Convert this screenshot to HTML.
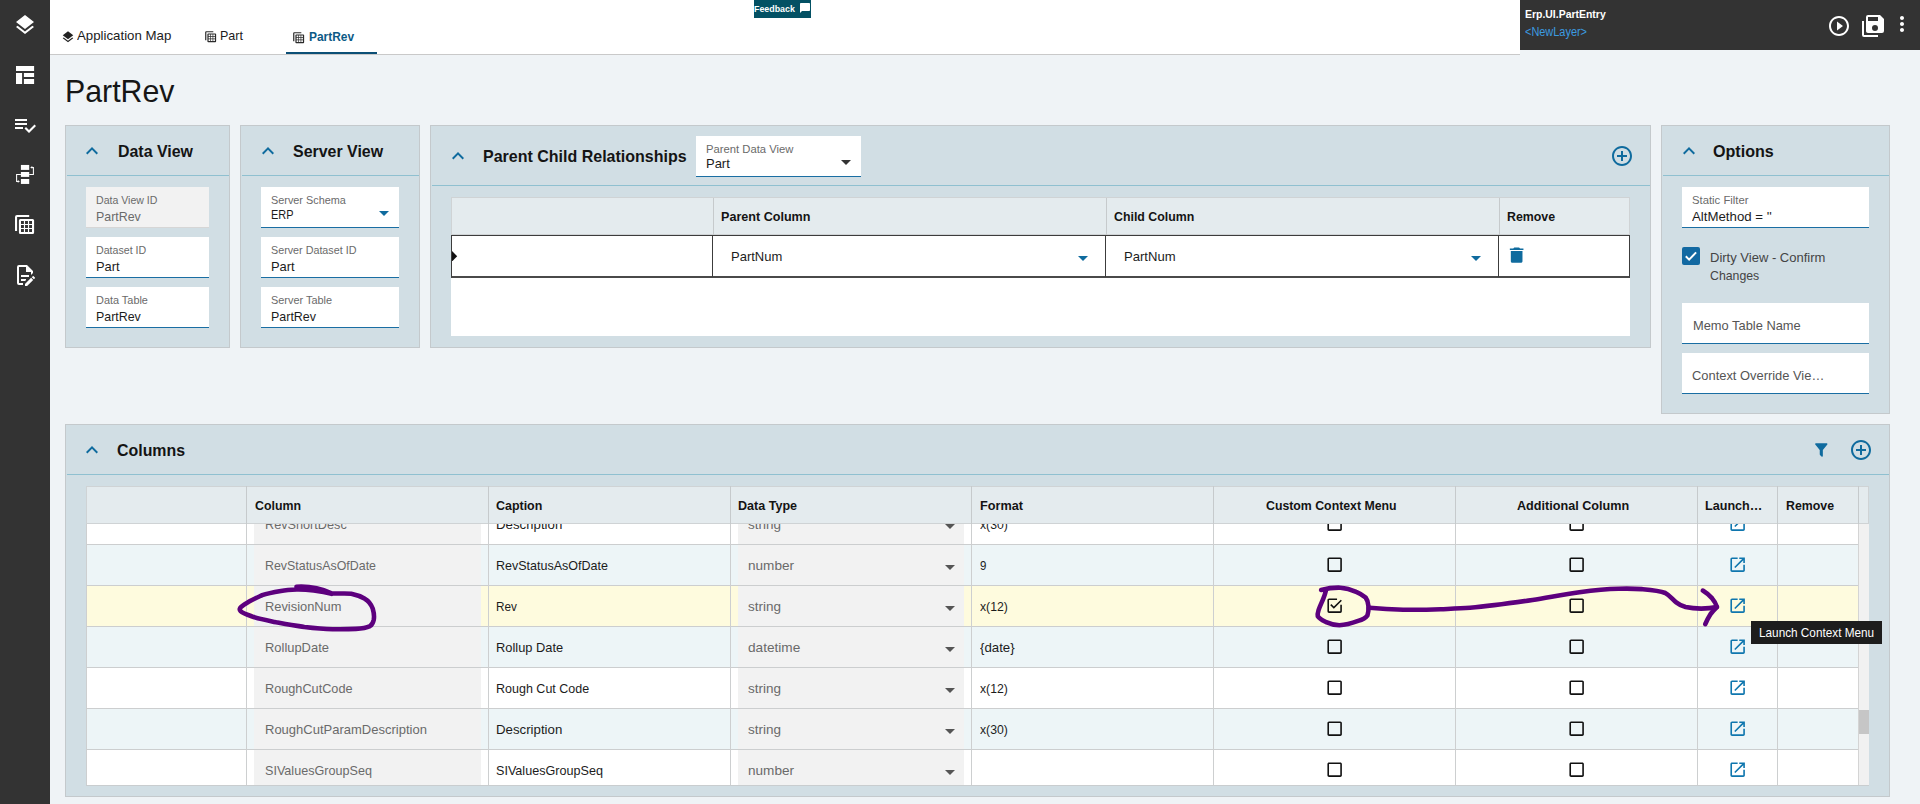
<!DOCTYPE html>
<html lang="en"><head><meta charset="utf-8"><title>PartRev - Application Studio</title>
<style>
html,body{margin:0;padding:0}
body{width:1920px;height:804px;overflow:hidden;background:#eff3f6;position:relative;font-family:"Liberation Sans",sans-serif}
body div,body svg.ic,nav,header{position:absolute}
.sidebar{left:0;top:0;width:50px;height:804px;background:#333}
.topbar{left:50px;top:0;width:1470px;height:54px;background:#fff}
.t{white-space:nowrap;line-height:0;font-size:0;margin:0;font-weight:400;position:absolute}
.t i{display:inline-block;width:0;height:60px;vertical-align:baseline}
.t span{display:inline-block;line-height:1;transform-origin:0 100%;vertical-align:baseline}
.grid{overflow:hidden}
</style></head>
<body>
<nav class="sidebar">
<svg class="ic" style="left:13px;top:13px" width="24" height="24" viewBox="0 0 24 24" ><path fill="#fff" d="M11.99 18.54l-7.37-5.73L3 14.07l9 7 9-7-1.63-1.27-7.38 5.74zM12 16l7.36-5.73L21 9l-9-7-9 7 1.63 1.27L12 16z"/></svg>
<svg class="ic" style="left:13px;top:63px" width="24" height="24" viewBox="0 0 24 24"><path fill="#fff" d="M3 3h18.100v5H3zM3 10h6.100v11H3zM10.900 10h10.200v3.900H10.900zM10.900 16h10.200v5H10.900z"/></svg>
<svg class="ic" style="left:13px;top:113px" width="24" height="24" viewBox="0 0 24 24" ><path fill="#fff" d="M14 10H2v2h12v-2zm0-4H2v2h12V6zM2 16h8v-2H2v2zm19.5-4.5L23 13l-6.99 7-4.51-4.5L13 14l3.01 3 5.49-5.5z"/></svg>
<svg class="ic" style="left:13px;top:163px" width="24" height="24" viewBox="0 0 24 24"><g fill="#fff"><rect x="7.900" y="1.950" width="8.300" height="4.950"/><rect x="7.900" y="9" width="8.300" height="4.900"/><rect x="7.900" y="16" width="8.300" height="4.950"/></g><g fill="none" stroke="#fff" stroke-width="1.050"><path d="M16.200 11.400h4.200v-7h-2"/><path d="M7.900 11.400H3.600v7h2"/></g><path fill="#fff" d="M17.200 4.400l2.100-1.400v2.800zM6.900 18.400l-2.100-1.400v2.800z"/></svg>
<svg class="ic" style="left:13px;top:213px" width="24" height="24" viewBox="0 0 24 24"><path fill="#fff" fill-rule="evenodd" d="M2 4a2 2 0 0 1 2-2h12.200v2.100H4.100V18H2zM7.400 5.900h12.200a1.500 1.500 0 0 1 1.500 1.500v12.200a1.500 1.500 0 0 1-1.500 1.500H7.400a1.500 1.500 0 0 1-1.500-1.500V7.400a1.500 1.500 0 0 1 1.500-1.500zM8 8h2.900v2.900h-2.900zM12.05 8h2.900v2.900h-2.900zM16.1 8h2.900v2.900h-2.900zM8 12.05h2.900v2.900h-2.900zM12.05 12.05h2.900v2.900h-2.900zM16.1 12.05h2.900v2.900h-2.900zM8 16.1h2.900v2.900h-2.900zM12.05 16.1h2.900v2.900h-2.900zM16.1 16.1h2.900v2.900h-2.900z"/></svg>
<svg class="ic" style="left:13px;top:263px" width="24" height="24" viewBox="0 0 24 24" ><path fill="#fff" d="M8,12H16V14H8V12M10,20H6V4H13V9H18V12.1L20,10.1V8L14,2H6A2,2 0 0,0 4,4V20A2,2 0 0,0 6,22H10V20M8,18H12.1L13,17.1V16H8V18M20.2,13C20.3,13 20.5,13.1 20.6,13.2L21.9,14.5C22.1,14.700 22.100,15.100 21.900,15.300L20.900,16.300L18.800,14.200L19.800,13.200C19.900,13.100 20,13 20.200,13M20.200,16.900L14.100,23H12V20.900L18.100,14.800L20.200,16.900Z"/></svg>
</nav>
<header class="topbar"></header>
<div style="left:50px;top:54px;width:1470px;height:1px;background:#c9c9c9"></div>
<svg class="ic" style="left:61px;top:30.3px" width="14" height="14" viewBox="0 0 24 24" ><path fill="#222" d="M11.99 18.54l-7.37-5.73L3 14.07l9 7 9-7-1.63-1.27-7.38 5.74zM12 16l7.36-5.73L21 9l-9-7-9 7 1.63 1.27L12 16z"/></svg>
<div class="t " style="left:77.2px;top:-20px"><i></i><span style="font-size:13px;color:#1c1c1c;transform:scaleX(1.0194)">Application Map</span></div>
<svg class="ic" style="left:203.8px;top:29.7px" width="13.8" height="13.8" viewBox="0 0 24 24"><path fill="#2b2b2b" fill-rule="evenodd" d="M2 4a2 2 0 0 1 2-2h12.200v2.100H4.100V18H2zM7.400 5.900h12.200a1.500 1.500 0 0 1 1.500 1.500v12.200a1.500 1.500 0 0 1-1.500 1.500H7.400a1.500 1.500 0 0 1-1.500-1.500V7.400a1.500 1.500 0 0 1 1.500-1.500zM8 8h2.900v2.900h-2.900zM12.05 8h2.900v2.900h-2.900zM16.1 8h2.900v2.900h-2.900zM8 12.05h2.900v2.900h-2.900zM12.05 12.05h2.900v2.900h-2.900zM16.1 12.05h2.900v2.900h-2.900zM8 16.1h2.900v2.900h-2.900zM12.05 16.1h2.900v2.900h-2.900zM16.1 16.1h2.900v2.900h-2.900z"/></svg>
<div class="t " style="left:220.0px;top:-20px"><i></i><span style="font-size:13px;color:#1c1c1c;transform:scaleX(0.9647)">Part</span></div>
<svg class="ic" style="left:291.9px;top:30.6px" width="13.8" height="13.8" viewBox="0 0 24 24"><path fill="#2b2b2b" fill-rule="evenodd" d="M2 4a2 2 0 0 1 2-2h12.200v2.100H4.100V18H2zM7.400 5.900h12.200a1.500 1.500 0 0 1 1.500 1.500v12.200a1.500 1.500 0 0 1-1.500 1.500H7.400a1.500 1.500 0 0 1-1.500-1.500V7.400a1.500 1.500 0 0 1 1.500-1.500zM8 8h2.900v2.900h-2.900zM12.05 8h2.900v2.900h-2.900zM16.1 8h2.900v2.900h-2.900zM8 12.05h2.900v2.900h-2.900zM12.05 12.05h2.900v2.900h-2.900zM16.1 12.05h2.900v2.900h-2.900zM8 16.1h2.900v2.900h-2.900zM12.05 16.1h2.900v2.900h-2.900zM16.1 16.1h2.900v2.900h-2.900z"/></svg>
<div class="t " style="left:308.7px;top:-19px"><i></i><span style="font-size:13px;color:#0c5a86;transform:scaleX(0.9178);font-weight:700">PartRev</span></div>
<div style="left:286px;top:52px;width:91px;height:2px;background:#0c4f76"></div>
<div style="left:754px;top:0px;width:57px;height:18px;background:#035164"></div>
<div class="t " style="left:753.9px;top:-48px"><i></i><span style="font-size:9.6px;color:#fff;transform:scaleX(0.9235);font-weight:700">Feedback</span></div>
<svg class="ic" style="left:799px;top:2px" width="12" height="12" viewBox="0 0 24 24" ><path fill="#fff" d="M20 2H4c-1.1 0-2 .9-2 2v18l4-4h14c1.1 0 2-.9 2-2V4c0-1.1-.9-2-2-2z"/></svg>
<div style="left:1520px;top:0px;width:400px;height:50px;background:#333333"></div>
<div class="t " style="left:1525.2px;top:-42px"><i></i><span style="font-size:11.2px;color:#fff;transform:scaleX(0.9340);font-weight:700">Erp.UI.PartEntry</span></div>
<div class="t " style="left:1525.0px;top:-24px"><i></i><span style="font-size:12px;color:#3c9be0;transform:scaleX(0.9112)">&lt;NewLayer&gt;</span></div>
<svg class="ic" style="left:1827px;top:13.7px" width="24" height="24" viewBox="0 0 24 24" ><path fill="#fff" d="M10 16.5l6-4.5-6-4.5v9zM12 2C6.48 2 2 6.48 2 12s4.48 10 10 10 10-4.48 10-10S17.52 2 12 2zm0 18c-4.41 0-8-3.59-8-8s3.59-8 8-8 8 3.59 8 8-3.59 8-8 8z"/></svg>
<svg class="ic" style="left:1860.5px;top:13.6px" width="24" height="24" viewBox="0 0 24 24" ><path fill="#fff" d="M17,7V3H7V7H17M14,17A3,3 0 0,0 17,14A3,3 0 0,0 14,11A3,3 0 0,0 11,14A3,3 0 0,0 14,17M19,1L23,5V17A2,2 0 0,1 21,19H7C5.89,19 5,18.1 5,17V3A2,2 0 0,1 7,1H19M1,7H3V21H17V23H3A2,2 0 0,1 1,21V7Z"/></svg>
<svg class="ic" style="left:1890px;top:11.5px" width="24" height="24" viewBox="0 0 24 24" ><path fill="#fff" d="M12 8c1.1 0 2-.9 2-2s-.9-2-2-2-2 .9-2 2 .9 2 2 2zm0 2c-1.1 0-2 .9-2 2s.9 2 2 2 2-.9 2-2-.9-2-2-2zm0 6c-1.1 0-2 .9-2 2s.9 2 2 2 2-.9 2-2-.9-2-2-2z"/></svg>
<h1 class="t" style="left:65.2px;top:42px"><i></i><span style="font-size:30.5px;color:#161616;transform:scaleX(0.9938)">PartRev</span></h1>
<div class="panel" style="left:65px;top:125px;width:165px;height:223px;background:#d1dee4;box-shadow:inset 0 0 0 1px #c4c9cc"></div>
<div style="left:66.5px;top:175px;width:162px;height:1px;background:#8fc0d0"></div>
<svg class="ic" style="left:80px;top:138.7px" width="24" height="24" viewBox="0 0 24 24" ><path fill="#0f6b9e" d="M12 8l-6 6 1.41 1.41L12 10.83l4.59 4.58L18 14z"/></svg>
<div class="t " style="left:117.8px;top:97px"><i></i><span style="font-size:16.5px;color:#141414;transform:scaleX(0.9658);font-weight:700">Data View</span></div>
<div style="left:86px;top:187px;width:123px;height:40px;background:#f2f2f2"></div>
<div style="left:86px;top:227px;width:123px;height:1px;background:#d6d6d6"></div>
<div class="t " style="left:96.4px;top:144px"><i></i><span style="font-size:11.2px;color:#6a6a6a;transform:scaleX(0.9439)">Data View ID</span></div>
<div class="t " style="left:96.4px;top:161px"><i></i><span style="font-size:13px;color:#6a6a6a;transform:scaleX(0.9540)">PartRev</span></div>
<div style="left:86px;top:237px;width:123px;height:40px;background:#fff"></div>
<div style="left:86px;top:277px;width:123px;height:1px;background:#1b6ea3"></div>
<div style="left:86px;top:276.5px;width:123px;height:1px;background:#1b6ea3;opacity:.45"></div>
<div class="t " style="left:96.4px;top:194px"><i></i><span style="font-size:11.2px;color:#6a6a6a;transform:scaleX(0.9507)">Dataset ID</span></div>
<div class="t " style="left:96.4px;top:211px"><i></i><span style="font-size:13px;color:#1c1c1c;transform:scaleX(0.9898)">Part</span></div>
<div style="left:86px;top:287px;width:123px;height:40px;background:#fff"></div>
<div style="left:86px;top:327px;width:123px;height:1px;background:#1b6ea3"></div>
<div style="left:86px;top:326.5px;width:123px;height:1px;background:#1b6ea3;opacity:.45"></div>
<div class="t " style="left:96.4px;top:244px"><i></i><span style="font-size:11.2px;color:#6a6a6a;transform:scaleX(0.9748)">Data Table</span></div>
<div class="t " style="left:96.4px;top:261px"><i></i><span style="font-size:13px;color:#1c1c1c;transform:scaleX(0.9540)">PartRev</span></div>
<div class="panel" style="left:240px;top:125px;width:180px;height:223px;background:#d1dee4;box-shadow:inset 0 0 0 1px #c4c9cc"></div>
<div style="left:241.5px;top:175px;width:177px;height:1px;background:#8fc0d0"></div>
<svg class="ic" style="left:255.5px;top:139.2px" width="24" height="24" viewBox="0 0 24 24" ><path fill="#0f6b9e" d="M12 8l-6 6 1.41 1.41L12 10.83l4.59 4.58L18 14z"/></svg>
<div class="t " style="left:292.6px;top:97px"><i></i><span style="font-size:16.5px;color:#141414;transform:scaleX(0.9661);font-weight:700">Server View</span></div>
<div style="left:261px;top:187px;width:138px;height:40px;background:#fff"></div>
<div style="left:261px;top:227px;width:138px;height:1px;background:#1b6ea3"></div>
<div style="left:261px;top:226.5px;width:138px;height:1px;background:#1b6ea3;opacity:.45"></div>
<div class="t " style="left:271.4px;top:144px"><i></i><span style="font-size:11.2px;color:#6a6a6a;transform:scaleX(0.9703)">Server Schema</span></div>
<div class="t " style="left:271.4px;top:159px"><i></i><span style="font-size:13px;color:#1c1c1c;transform:scaleX(0.8417)">ERP</span></div>
<svg class="ic" style="left:372.4px;top:200.8px" width="24" height="24" viewBox="0 0 24 24" ><path fill="#0f6b9e" d="M7 10l5 5 5-5z"/></svg>
<div style="left:261px;top:237px;width:138px;height:40px;background:#fff"></div>
<div style="left:261px;top:277px;width:138px;height:1px;background:#1b6ea3"></div>
<div style="left:261px;top:276.5px;width:138px;height:1px;background:#1b6ea3;opacity:.45"></div>
<div class="t " style="left:271.4px;top:194px"><i></i><span style="font-size:11.2px;color:#6a6a6a;transform:scaleX(0.9606)">Server Dataset ID</span></div>
<div class="t " style="left:271.4px;top:211px"><i></i><span style="font-size:13px;color:#1c1c1c;transform:scaleX(0.9940)">Part</span></div>
<div style="left:261px;top:287px;width:138px;height:40px;background:#fff"></div>
<div style="left:261px;top:327px;width:138px;height:1px;background:#1b6ea3"></div>
<div style="left:261px;top:326.5px;width:138px;height:1px;background:#1b6ea3;opacity:.45"></div>
<div class="t " style="left:271.4px;top:244px"><i></i><span style="font-size:11.2px;color:#6a6a6a;transform:scaleX(0.9750)">Server Table</span></div>
<div class="t " style="left:271.4px;top:261px"><i></i><span style="font-size:13px;color:#1c1c1c;transform:scaleX(0.9582)">PartRev</span></div>
<div class="panel" style="left:430px;top:125px;width:1221px;height:223px;background:#d1dee4;box-shadow:inset 0 0 0 1px #c4c9cc"></div>
<div style="left:431.5px;top:185px;width:1218px;height:1px;background:#8fc0d0"></div>
<svg class="ic" style="left:446px;top:144.2px" width="24" height="24" viewBox="0 0 24 24" ><path fill="#0f6b9e" d="M12 8l-6 6 1.41 1.41L12 10.83l4.59 4.58L18 14z"/></svg>
<div class="t " style="left:482.6px;top:102px"><i></i><span style="font-size:16.5px;color:#141414;transform:scaleX(0.9697);font-weight:700">Parent Child Relationships</span></div>
<div style="left:696px;top:136px;width:165px;height:40px;background:#fff"></div>
<div style="left:696px;top:176px;width:165px;height:1px;background:#1b6ea3"></div>
<div style="left:696px;top:175.5px;width:165px;height:1px;background:#1b6ea3;opacity:.45"></div>
<div class="t " style="left:706.2px;top:93px"><i></i><span style="font-size:11.2px;color:#6a6a6a;transform:scaleX(1.0063)">Parent Data View</span></div>
<div class="t " style="left:706.2px;top:108px"><i></i><span style="font-size:13px;color:#1c1c1c;transform:scaleX(0.9982)">Part</span></div>
<svg class="ic" style="left:834.4px;top:150px" width="24" height="24" viewBox="0 0 24 24" ><path fill="#333" d="M7 10l5 5 5-5z"/></svg>
<svg class="ic" style="left:1610.2px;top:143.9px" width="24" height="24" viewBox="0 0 24 24" ><path fill="#0f6b9e" d="M13 7h-2v4H7v2h4v4h2v-4h4v-2h-4V7zm-1-5C6.48 2 2 6.48 2 12s4.48 10 10 10 10-4.48 10-10S17.52 2 12 2zm0 18c-4.41 0-8-3.59-8-8s3.59-8 8-8 8 3.59 8 8-3.59 8-8 8z"/></svg>
<div style="left:451px;top:198px;width:1179px;height:138px;background:#fff"></div>
<div style="left:451px;top:197px;width:1179px;height:38px;background:#e4ebee;box-shadow:inset 0 0 0 1px #cfd3d5"></div>
<div style="left:713px;top:198px;width:1px;height:37px;background:#c6cacc"></div>
<div style="left:1106px;top:198px;width:1px;height:37px;background:#c6cacc"></div>
<div style="left:1499px;top:198px;width:1px;height:37px;background:#c6cacc"></div>
<div class="t " style="left:720.5px;top:161px"><i></i><span style="font-size:13px;color:#141414;transform:scaleX(0.9680);font-weight:700">Parent Column</span></div>
<div class="t " style="left:1114.0px;top:161px"><i></i><span style="font-size:13px;color:#141414;transform:scaleX(0.9504);font-weight:700">Child Column</span></div>
<div class="t " style="left:1507.4px;top:161px"><i></i><span style="font-size:13px;color:#141414;transform:scaleX(0.9510);font-weight:700">Remove</span></div>
<div style="left:451px;top:235px;width:1179px;height:43px;background:#fff;box-sizing:border-box;border:1px solid #3c3c3c;border-bottom:2px solid #4a4a4a"></div>
<div style="left:712px;top:235px;width:1px;height:42px;background:#3c3c3c"></div>
<div style="left:1105px;top:235px;width:1px;height:42px;background:#3c3c3c"></div>
<div style="left:1498px;top:235px;width:1px;height:42px;background:#3c3c3c"></div>
<svg class="ic" style="left:452px;top:250.7px" width="5.5" height="10.5" viewBox="0 0 5.5 10.5"><path d="M0 0l5.200 5.250L0 10.500z" fill="#111"/></svg>
<div class="t " style="left:731.0px;top:201px"><i></i><span style="font-size:13px;color:#1c1c1c;transform:scaleX(1.0002)">PartNum</span></div>
<div class="t " style="left:1123.6px;top:201px"><i></i><span style="font-size:13px;color:#1c1c1c;transform:scaleX(1.0060)">PartNum</span></div>
<svg class="ic" style="left:1071.4px;top:246px" width="24" height="24" viewBox="0 0 24 24" ><path fill="#0f6b9e" d="M7 10l5 5 5-5z"/></svg>
<svg class="ic" style="left:1464.2px;top:246px" width="24" height="24" viewBox="0 0 24 24" ><path fill="#0f6b9e" d="M7 10l5 5 5-5z"/></svg>
<svg class="ic" style="left:1504.7px;top:244.9px" width="23.3" height="20.4" viewBox="0 0 24 24" preserveAspectRatio="none"><path fill="#0f6b9e" d="M6 19c0 1.1.9 2 2 2h8c1.1 0 2-.9 2-2V7H6v12zM19 4h-3.5l-1-1h-5l-1 1H5v2h14V4z"/></svg>
<div class="panel" style="left:1661px;top:125px;width:229px;height:289px;background:#d1dee4;box-shadow:inset 0 0 0 1px #c4c9cc"></div>
<div style="left:1662.5px;top:175px;width:226px;height:1px;background:#8fc0d0"></div>
<svg class="ic" style="left:1676.6px;top:139.2px" width="24" height="24" viewBox="0 0 24 24" ><path fill="#0f6b9e" d="M12 8l-6 6 1.41 1.41L12 10.83l4.59 4.58L18 14z"/></svg>
<div class="t " style="left:1713.4px;top:97px"><i></i><span style="font-size:16.5px;color:#141414;transform:scaleX(0.9755);font-weight:700">Options</span></div>
<div style="left:1682px;top:187px;width:187px;height:40px;background:#fff"></div>
<div style="left:1682px;top:227px;width:187px;height:1px;background:#1b6ea3"></div>
<div style="left:1682px;top:226.5px;width:187px;height:1px;background:#1b6ea3;opacity:.45"></div>
<div class="t " style="left:1692.4px;top:144px"><i></i><span style="font-size:11.2px;color:#6a6a6a;transform:scaleX(1.0105)">Static Filter</span></div>
<div class="t " style="left:1692.4px;top:161px"><i></i><span style="font-size:13px;color:#1c1c1c;transform:scaleX(1.0190)">AltMethod = &#x27;&#x27;</span></div>
<div style="left:1682px;top:247px;width:18px;height:18px;background:#1269a2;border-radius:2px"></div>
<svg class="ic" style="left:1682px;top:247px" width="18" height="18" viewBox="0 0 18 18"><path d="M3.800 9.300l3.300 3.300 7-7.200" fill="none" stroke="#fff" stroke-width="2"/></svg>
<div class="t " style="left:1709.9px;top:202px"><i></i><span style="font-size:13px;color:#444;transform:scaleX(1.0006)">Dirty View - Confirm</span></div>
<div class="t " style="left:1709.9px;top:220px"><i></i><span style="font-size:13px;color:#444;transform:scaleX(0.9454)">Changes</span></div>
<div style="left:1682px;top:303px;width:187px;height:40px;background:#fff"></div>
<div style="left:1682px;top:343px;width:187px;height:1px;background:#1b6ea3"></div>
<div style="left:1682px;top:342.5px;width:187px;height:1px;background:#1b6ea3;opacity:.45"></div>
<div class="t " style="left:1692.5px;top:270px"><i></i><span style="font-size:13px;color:#555;transform:scaleX(0.9893)">Memo Table Name</span></div>
<div style="left:1682px;top:353px;width:187px;height:40px;background:#fff"></div>
<div style="left:1682px;top:393px;width:187px;height:1px;background:#1b6ea3"></div>
<div style="left:1682px;top:392.5px;width:187px;height:1px;background:#1b6ea3;opacity:.45"></div>
<div class="t " style="left:1692.4px;top:320px"><i></i><span style="font-size:13px;color:#555;transform:scaleX(0.9915)">Context Override Vie…</span></div>
<div class="panel" style="left:65px;top:424px;width:1825px;height:373px;background:#d1dee4;box-shadow:inset 0 0 0 1px #c4c9cc"></div>
<div style="left:66.5px;top:474px;width:1822px;height:1px;background:#8fc0d0"></div>
<svg class="ic" style="left:80.3px;top:438.0px" width="24" height="24" viewBox="0 0 24 24" ><path fill="#0f6b9e" d="M12 8l-6 6 1.41 1.41L12 10.83l4.59 4.58L18 14z"/></svg>
<div class="t " style="left:117.3px;top:396px"><i></i><span style="font-size:16.5px;color:#141414;transform:scaleX(0.9648);font-weight:700">Columns</span></div>
<svg class="ic" style="left:1811.8px;top:441.2px" width="18.6" height="17.9" viewBox="0 0 24 24" preserveAspectRatio="none"><path fill="#0f6b9e" d="M14,12V19.88C14.04,20.18 13.94,20.5 13.71,20.71C13.32,21.1 12.69,21.1 12.3,20.71L10.29,18.7C10.06,18.47 9.96,18.16 10,17.87V12H9.97L4.21,4.62C3.87,4.19 3.95,3.56 4.38,3.22C4.57,3.08 4.78,3 5,3V3H19V3C19.22,3 19.43,3.08 19.62,3.22C20.05,3.56 20.13,4.19 19.79,4.62L14.03,12H14Z"/></svg>
<svg class="ic" style="left:1849px;top:438px" width="24" height="24" viewBox="0 0 24 24" ><path fill="#0f6b9e" d="M13 7h-2v4H7v2h4v4h2v-4h4v-2h-4V7zm-1-5C6.48 2 2 6.48 2 12s4.48 10 10 10 10-4.48 10-10S17.52 2 12 2zm0 18c-4.41 0-8-3.59-8-8s3.59-8 8-8 8 3.59 8 8-3.59 8-8 8z"/></svg>
<div class="grid" style="left:86px;top:486px;width:1783px;height:299px">
<div style="position:absolute;left:-86px;top:-486px;width:1920px;height:804px">
<div style="left:86px;top:503px;width:1772px;height:41px;background:#ffffff"></div>
<div style="left:254px;top:503px;width:227px;height:41px;background:#f2f2f2"></div>
<div style="left:738px;top:503px;width:225.5px;height:41px;background:#f2f2f2"></div>
<div style="left:86px;top:544px;width:1772px;height:41px;background:#edf5f7"></div>
<div style="left:254px;top:544px;width:227px;height:41px;background:#f2f2f2"></div>
<div style="left:738px;top:544px;width:225.5px;height:41px;background:#f2f2f2"></div>
<div style="left:86px;top:585px;width:1772px;height:41px;background:#fefbde"></div>
<div style="left:254px;top:585px;width:227px;height:41px;background:#f2f2f2"></div>
<div style="left:738px;top:585px;width:225.5px;height:41px;background:#f2f2f2"></div>
<div style="left:86px;top:626px;width:1772px;height:41px;background:#edf5f7"></div>
<div style="left:254px;top:626px;width:227px;height:41px;background:#f2f2f2"></div>
<div style="left:738px;top:626px;width:225.5px;height:41px;background:#f2f2f2"></div>
<div style="left:86px;top:667px;width:1772px;height:41px;background:#ffffff"></div>
<div style="left:254px;top:667px;width:227px;height:41px;background:#f2f2f2"></div>
<div style="left:738px;top:667px;width:225.5px;height:41px;background:#f2f2f2"></div>
<div style="left:86px;top:708px;width:1772px;height:41px;background:#edf5f7"></div>
<div style="left:254px;top:708px;width:227px;height:41px;background:#f2f2f2"></div>
<div style="left:738px;top:708px;width:225.5px;height:41px;background:#f2f2f2"></div>
<div style="left:86px;top:749px;width:1772px;height:41px;background:#ffffff"></div>
<div style="left:254px;top:749px;width:227px;height:41px;background:#f2f2f2"></div>
<div style="left:738px;top:749px;width:225.5px;height:41px;background:#f2f2f2"></div>
<div style="left:86px;top:544px;width:1772px;height:1px;background:#cccecf"></div>
<div class="t " style="left:264.8px;top:469px"><i></i><span style="font-size:13px;color:#6a6a6a;transform:scaleX(0.9750)">RevShortDesc</span></div>
<div class="t " style="left:496.4px;top:469px"><i></i><span style="font-size:13px;color:#1c1c1c;transform:scaleX(1.0196)">Description</span></div>
<div class="t " style="left:748.0px;top:469px"><i></i><span style="font-size:13px;color:#6a6a6a;transform:scaleX(1.0381)">string</span></div>
<div class="t " style="left:979.8px;top:469px"><i></i><span style="font-size:13px;color:#1c1c1c;transform:scaleX(0.9419)">x(30)</span></div>
<svg class="ic" style="left:937.7px;top:514.2px" width="24" height="24" viewBox="0 0 24 24" ><path fill="#555" d="M7 10l5 5 5-5z"/></svg>
<svg class="ic" style="left:1324.8px;top:514px" width="19.3" height="19.3" viewBox="0 0 24 24" ><path fill="#111" d="M19 5v14H5V5h14m0-2H5c-1.1 0-2 .9-2 2v14c0 1.1.9 2 2 2h14c1.1 0 2-.9 2-2V5c0-1.1-.9-2-2-2z"/></svg>
<svg class="ic" style="left:1566.8px;top:514px" width="19.3" height="19.3" viewBox="0 0 24 24" ><path fill="#111" d="M19 5v14H5V5h14m0-2H5c-1.1 0-2 .9-2 2v14c0 1.1.9 2 2 2h14c1.1 0 2-.9 2-2V5c0-1.1-.9-2-2-2z"/></svg>
<svg class="ic" style="left:1727.9px;top:513.7px" width="19.3" height="19.3" viewBox="0 0 24 24" ><path fill="#0f76ae" d="M19 19H5V5h7V3H5c-1.11 0-2 .9-2 2v14c0 1.1.89 2 2 2h14c1.1 0 2-.9 2-2v-7h-2v7zM14 3v2h3.59l-9.83 9.83 1.41 1.41L19 6.41V10h2V3h-7z"/></svg>
<div style="left:86px;top:585px;width:1772px;height:1px;background:#cccecf"></div>
<div class="t " style="left:264.8px;top:510px"><i></i><span style="font-size:13px;color:#6a6a6a;transform:scaleX(0.9542)">RevStatusAsOfDate</span></div>
<div class="t " style="left:496.4px;top:510px"><i></i><span style="font-size:13px;color:#1c1c1c;transform:scaleX(0.9628)">RevStatusAsOfDate</span></div>
<div class="t " style="left:748.0px;top:510px"><i></i><span style="font-size:13px;color:#6a6a6a;transform:scaleX(1.0436)">number</span></div>
<div class="t " style="left:979.8px;top:510px"><i></i><span style="font-size:13px;color:#1c1c1c;transform:scaleX(0.8852)">9</span></div>
<svg class="ic" style="left:937.7px;top:555.2px" width="24" height="24" viewBox="0 0 24 24" ><path fill="#555" d="M7 10l5 5 5-5z"/></svg>
<svg class="ic" style="left:1324.8px;top:555px" width="19.3" height="19.3" viewBox="0 0 24 24" ><path fill="#111" d="M19 5v14H5V5h14m0-2H5c-1.1 0-2 .9-2 2v14c0 1.1.9 2 2 2h14c1.1 0 2-.9 2-2V5c0-1.1-.9-2-2-2z"/></svg>
<svg class="ic" style="left:1566.8px;top:555px" width="19.3" height="19.3" viewBox="0 0 24 24" ><path fill="#111" d="M19 5v14H5V5h14m0-2H5c-1.1 0-2 .9-2 2v14c0 1.1.9 2 2 2h14c1.1 0 2-.9 2-2V5c0-1.1-.9-2-2-2z"/></svg>
<svg class="ic" style="left:1727.9px;top:554.7px" width="19.3" height="19.3" viewBox="0 0 24 24" ><path fill="#0f76ae" d="M19 19H5V5h7V3H5c-1.11 0-2 .9-2 2v14c0 1.1.89 2 2 2h14c1.1 0 2-.9 2-2v-7h-2v7zM14 3v2h3.59l-9.83 9.83 1.41 1.41L19 6.41V10h2V3h-7z"/></svg>
<div style="left:86px;top:626px;width:1772px;height:1px;background:#cccecf"></div>
<div class="t " style="left:264.8px;top:551px"><i></i><span style="font-size:13px;color:#6a6a6a;transform:scaleX(0.9883)">RevisionNum</span></div>
<div class="t " style="left:496.4px;top:551px"><i></i><span style="font-size:13px;color:#1c1c1c;transform:scaleX(0.9040)">Rev</span></div>
<div class="t " style="left:748.0px;top:551px"><i></i><span style="font-size:13px;color:#6a6a6a;transform:scaleX(1.0381)">string</span></div>
<div class="t " style="left:979.8px;top:551px"><i></i><span style="font-size:13px;color:#1c1c1c;transform:scaleX(0.9419)">x(12)</span></div>
<svg class="ic" style="left:937.7px;top:596.2px" width="24" height="24" viewBox="0 0 24 24" ><path fill="#555" d="M7 10l5 5 5-5z"/></svg>
<svg class="ic" style="left:1324.8px;top:596px" width="19.3" height="19.3" viewBox="0 0 24 24" ><path fill="#111" d="M19,19H5V5H15V3H5C3.89,3 3,3.89 3,5V19A2,2 0 0,0 5,21H19A2,2 0 0,0 21,19V11H19M7.91,10.08L6.5,11.5L11,16L21,6L19.59,4.58L11,13.17L7.91,10.08Z"/></svg>
<svg class="ic" style="left:1566.8px;top:596px" width="19.3" height="19.3" viewBox="0 0 24 24" ><path fill="#111" d="M19 5v14H5V5h14m0-2H5c-1.1 0-2 .9-2 2v14c0 1.1.9 2 2 2h14c1.1 0 2-.9 2-2V5c0-1.1-.9-2-2-2z"/></svg>
<svg class="ic" style="left:1727.9px;top:595.7px" width="19.3" height="19.3" viewBox="0 0 24 24" ><path fill="#0f76ae" d="M19 19H5V5h7V3H5c-1.11 0-2 .9-2 2v14c0 1.1.89 2 2 2h14c1.1 0 2-.9 2-2v-7h-2v7zM14 3v2h3.59l-9.83 9.83 1.41 1.41L19 6.41V10h2V3h-7z"/></svg>
<div style="left:86px;top:667px;width:1772px;height:1px;background:#cccecf"></div>
<div class="t " style="left:264.8px;top:592px"><i></i><span style="font-size:13px;color:#6a6a6a;transform:scaleX(0.9935)">RollupDate</span></div>
<div class="t " style="left:496.4px;top:592px"><i></i><span style="font-size:13px;color:#1c1c1c;transform:scaleX(0.9893)">Rollup Date</span></div>
<div class="t " style="left:748.0px;top:592px"><i></i><span style="font-size:13px;color:#6a6a6a;transform:scaleX(1.0489)">datetime</span></div>
<div class="t " style="left:979.8px;top:592px"><i></i><span style="font-size:13px;color:#1c1c1c;transform:scaleX(1.0181)">{date}</span></div>
<svg class="ic" style="left:937.7px;top:637.2px" width="24" height="24" viewBox="0 0 24 24" ><path fill="#555" d="M7 10l5 5 5-5z"/></svg>
<svg class="ic" style="left:1324.8px;top:637px" width="19.3" height="19.3" viewBox="0 0 24 24" ><path fill="#111" d="M19 5v14H5V5h14m0-2H5c-1.1 0-2 .9-2 2v14c0 1.1.9 2 2 2h14c1.1 0 2-.9 2-2V5c0-1.1-.9-2-2-2z"/></svg>
<svg class="ic" style="left:1566.8px;top:637px" width="19.3" height="19.3" viewBox="0 0 24 24" ><path fill="#111" d="M19 5v14H5V5h14m0-2H5c-1.1 0-2 .9-2 2v14c0 1.1.9 2 2 2h14c1.1 0 2-.9 2-2V5c0-1.1-.9-2-2-2z"/></svg>
<svg class="ic" style="left:1727.9px;top:636.7px" width="19.3" height="19.3" viewBox="0 0 24 24" ><path fill="#0f76ae" d="M19 19H5V5h7V3H5c-1.11 0-2 .9-2 2v14c0 1.1.89 2 2 2h14c1.1 0 2-.9 2-2v-7h-2v7zM14 3v2h3.59l-9.83 9.83 1.41 1.41L19 6.41V10h2V3h-7z"/></svg>
<div style="left:86px;top:708px;width:1772px;height:1px;background:#cccecf"></div>
<div class="t " style="left:264.8px;top:633px"><i></i><span style="font-size:13px;color:#6a6a6a;transform:scaleX(0.9764)">RoughCutCode</span></div>
<div class="t " style="left:496.4px;top:633px"><i></i><span style="font-size:13px;color:#1c1c1c;transform:scaleX(0.9624)">Rough Cut Code</span></div>
<div class="t " style="left:748.0px;top:633px"><i></i><span style="font-size:13px;color:#6a6a6a;transform:scaleX(1.0381)">string</span></div>
<div class="t " style="left:979.8px;top:633px"><i></i><span style="font-size:13px;color:#1c1c1c;transform:scaleX(0.9419)">x(12)</span></div>
<svg class="ic" style="left:937.7px;top:678.2px" width="24" height="24" viewBox="0 0 24 24" ><path fill="#555" d="M7 10l5 5 5-5z"/></svg>
<svg class="ic" style="left:1324.8px;top:678px" width="19.3" height="19.3" viewBox="0 0 24 24" ><path fill="#111" d="M19 5v14H5V5h14m0-2H5c-1.1 0-2 .9-2 2v14c0 1.1.9 2 2 2h14c1.1 0 2-.9 2-2V5c0-1.1-.9-2-2-2z"/></svg>
<svg class="ic" style="left:1566.8px;top:678px" width="19.3" height="19.3" viewBox="0 0 24 24" ><path fill="#111" d="M19 5v14H5V5h14m0-2H5c-1.1 0-2 .9-2 2v14c0 1.1.9 2 2 2h14c1.1 0 2-.9 2-2V5c0-1.1-.9-2-2-2z"/></svg>
<svg class="ic" style="left:1727.9px;top:677.7px" width="19.3" height="19.3" viewBox="0 0 24 24" ><path fill="#0f76ae" d="M19 19H5V5h7V3H5c-1.11 0-2 .9-2 2v14c0 1.1.89 2 2 2h14c1.1 0 2-.9 2-2v-7h-2v7zM14 3v2h3.59l-9.83 9.83 1.41 1.41L19 6.41V10h2V3h-7z"/></svg>
<div style="left:86px;top:749px;width:1772px;height:1px;background:#cccecf"></div>
<div class="t " style="left:264.8px;top:674px"><i></i><span style="font-size:13px;color:#6a6a6a;transform:scaleX(1.0003)">RoughCutParamDescription</span></div>
<div class="t " style="left:496.4px;top:674px"><i></i><span style="font-size:13px;color:#1c1c1c;transform:scaleX(1.0196)">Description</span></div>
<div class="t " style="left:748.0px;top:674px"><i></i><span style="font-size:13px;color:#6a6a6a;transform:scaleX(1.0381)">string</span></div>
<div class="t " style="left:979.8px;top:674px"><i></i><span style="font-size:13px;color:#1c1c1c;transform:scaleX(0.9419)">x(30)</span></div>
<svg class="ic" style="left:937.7px;top:719.2px" width="24" height="24" viewBox="0 0 24 24" ><path fill="#555" d="M7 10l5 5 5-5z"/></svg>
<svg class="ic" style="left:1324.8px;top:719px" width="19.3" height="19.3" viewBox="0 0 24 24" ><path fill="#111" d="M19 5v14H5V5h14m0-2H5c-1.1 0-2 .9-2 2v14c0 1.1.9 2 2 2h14c1.1 0 2-.9 2-2V5c0-1.1-.9-2-2-2z"/></svg>
<svg class="ic" style="left:1566.8px;top:719px" width="19.3" height="19.3" viewBox="0 0 24 24" ><path fill="#111" d="M19 5v14H5V5h14m0-2H5c-1.1 0-2 .9-2 2v14c0 1.1.9 2 2 2h14c1.1 0 2-.9 2-2V5c0-1.1-.9-2-2-2z"/></svg>
<svg class="ic" style="left:1727.9px;top:718.7px" width="19.3" height="19.3" viewBox="0 0 24 24" ><path fill="#0f76ae" d="M19 19H5V5h7V3H5c-1.11 0-2 .9-2 2v14c0 1.1.89 2 2 2h14c1.1 0 2-.9 2-2v-7h-2v7zM14 3v2h3.59l-9.83 9.83 1.41 1.41L19 6.41V10h2V3h-7z"/></svg>
<div style="left:86px;top:790px;width:1772px;height:1px;background:#cccecf"></div>
<div class="t " style="left:264.8px;top:715px"><i></i><span style="font-size:13px;color:#6a6a6a;transform:scaleX(0.9689)">SIValuesGroupSeq</span></div>
<div class="t " style="left:496.4px;top:715px"><i></i><span style="font-size:13px;color:#1c1c1c;transform:scaleX(0.9689)">SIValuesGroupSeq</span></div>
<div class="t " style="left:748.0px;top:715px"><i></i><span style="font-size:13px;color:#6a6a6a;transform:scaleX(1.0436)">number</span></div>
<svg class="ic" style="left:937.7px;top:760.2px" width="24" height="24" viewBox="0 0 24 24" ><path fill="#555" d="M7 10l5 5 5-5z"/></svg>
<svg class="ic" style="left:1324.8px;top:760px" width="19.3" height="19.3" viewBox="0 0 24 24" ><path fill="#111" d="M19 5v14H5V5h14m0-2H5c-1.1 0-2 .9-2 2v14c0 1.1.9 2 2 2h14c1.1 0 2-.9 2-2V5c0-1.1-.9-2-2-2z"/></svg>
<svg class="ic" style="left:1566.8px;top:760px" width="19.3" height="19.3" viewBox="0 0 24 24" ><path fill="#111" d="M19 5v14H5V5h14m0-2H5c-1.1 0-2 .9-2 2v14c0 1.1.9 2 2 2h14c1.1 0 2-.9 2-2V5c0-1.1-.9-2-2-2z"/></svg>
<svg class="ic" style="left:1727.9px;top:759.7px" width="19.3" height="19.3" viewBox="0 0 24 24" ><path fill="#0f76ae" d="M19 19H5V5h7V3H5c-1.11 0-2 .9-2 2v14c0 1.1.89 2 2 2h14c1.1 0 2-.9 2-2v-7h-2v7zM14 3v2h3.59l-9.83 9.83 1.41 1.41L19 6.41V10h2V3h-7z"/></svg>
<div style="left:246px;top:524px;width:1px;height:262px;background:#cdcfd0"></div>
<div style="left:488px;top:524px;width:1px;height:262px;background:#cdcfd0"></div>
<div style="left:730px;top:524px;width:1px;height:262px;background:#cdcfd0"></div>
<div style="left:971px;top:524px;width:1px;height:262px;background:#cdcfd0"></div>
<div style="left:1213px;top:524px;width:1px;height:262px;background:#cdcfd0"></div>
<div style="left:1455px;top:524px;width:1px;height:262px;background:#cdcfd0"></div>
<div style="left:1697px;top:524px;width:1px;height:262px;background:#cdcfd0"></div>
<div style="left:1777px;top:524px;width:1px;height:262px;background:#cdcfd0"></div>
<div style="left:86px;top:524px;width:1px;height:262px;background:#cdcfd0"></div>
<div style="left:1858px;top:524px;width:11px;height:262px;background:#f1f1f1"></div>
<div style="left:1858px;top:524px;width:1px;height:262px;background:#d4d4d4"></div>
<div style="left:1859px;top:710px;width:10px;height:24px;background:#c6c6c6"></div>
<div style="left:86px;top:486px;width:1783px;height:38px;background:#e4ebee;box-shadow:inset 0 0 0 1px #cfd3d5"></div>
<div style="left:246px;top:486px;width:1px;height:38px;background:#c6cacc"></div>
<div style="left:488px;top:486px;width:1px;height:38px;background:#c6cacc"></div>
<div style="left:730px;top:486px;width:1px;height:38px;background:#c6cacc"></div>
<div style="left:971px;top:486px;width:1px;height:38px;background:#c6cacc"></div>
<div style="left:1213px;top:486px;width:1px;height:38px;background:#c6cacc"></div>
<div style="left:1455px;top:486px;width:1px;height:38px;background:#c6cacc"></div>
<div style="left:1697px;top:486px;width:1px;height:38px;background:#c6cacc"></div>
<div style="left:1777px;top:486px;width:1px;height:38px;background:#c6cacc"></div>
<div style="left:1858px;top:486px;width:1px;height:38px;background:#c6cacc"></div>
<div class="t " style="left:254.6px;top:450px"><i></i><span style="font-size:13px;color:#141414;transform:scaleX(0.9508);font-weight:700">Column</span></div>
<div class="t " style="left:496.4px;top:450px"><i></i><span style="font-size:13px;color:#141414;transform:scaleX(0.9569);font-weight:700">Caption</span></div>
<div class="t " style="left:738.2px;top:450px"><i></i><span style="font-size:13px;color:#141414;transform:scaleX(0.9662);font-weight:700">Data Type</span></div>
<div class="t " style="left:979.8px;top:450px"><i></i><span style="font-size:13px;color:#141414;transform:scaleX(0.9759);font-weight:700">Format</span></div>
<div class="t " style="left:1265.9px;top:450px"><i></i><span style="font-size:13px;color:#141414;transform:scaleX(0.9468);font-weight:700">Custom Context Menu</span></div>
<div class="t " style="left:1516.7px;top:450px"><i></i><span style="font-size:13px;color:#141414;transform:scaleX(0.9711);font-weight:700">Additional Column</span></div>
<div class="t " style="left:1705.1px;top:450px"><i></i><span style="font-size:13px;color:#141414;transform:scaleX(0.9692);font-weight:700">Launch…</span></div>
<div class="t " style="left:1785.7px;top:450px"><i></i><span style="font-size:13px;color:#141414;transform:scaleX(0.9490);font-weight:700">Remove</span></div>
</div></div>
<div style="left:86px;top:785px;width:1783px;height:1px;background:#c9cdcf"></div>
<svg class="ic" style="left:0;top:0" width="1920" height="804" viewBox="0 0 1920 804"><g fill="none" stroke="#5d007e" stroke-width="4.600" stroke-linecap="round" stroke-linejoin="round"><path d="M296.500 586.800C309 586 322 589 331.600 593.300C338 594 345 593 351.300 593.800C357 595 361 596.500 364.400 598.400C369 601 371.500 605 372.800 608.800C374 613 374.300 617 373.700 620C373 623 372 625 370 626.100C366 628 361 628.600 355.900 628.900C348 629.300 340 629.300 332.500 629.200C323 629 313 628 304.400 627C295 625.500 285 624 276.200 622.300C268 620.500 260 619 252.800 616.700C248 615 243 613.500 240.600 611.100C239.500 610 239.500 609 240.200 607.800C242 605.500 245 604 248.100 602.200C252 599.500 257 597.500 262.200 595.200C268 593 274 592 280.900 590.900C286 590 291 589.700 296.900 589.500C303 589.400 308 589.800 313.700 590.500C320 591.300 326 592.300 331.600 593.800"/><path d="M1321.100 590C1327 588.500 1334 587.500 1340.300 587.700C1346 588 1351 589.500 1356.200 591.900C1360 593.500 1363 595.300 1365.600 597.500C1367.500 600 1368.300 603 1368.400 605.900C1368.600 609 1368.500 612.500 1367.500 615.300C1365.500 618 1362 619.700 1358.100 620.900C1352 623.200 1346 625 1339.400 625.200C1334.500 625.200 1330 624 1326.200 622.200C1323 620.500 1319.500 618.800 1317.800 616.200C1317.300 614 1318 612 1318.700 609.700C1320 606 1322 602 1323.400 598.400C1324.300 596 1325.200 593.500 1325.800 590.900"/><path d="M1369.400 607.800C1380 608.800 1392 609.500 1403.100 609.700C1416 609.900 1428 609.700 1440.600 609.200C1450 608.800 1460 608.500 1470 607.800C1491 606 1512 603 1532.500 600C1548 597.500 1564 594.500 1579.400 592.200C1592 590.500 1605 589 1618.400 588.700C1626 588.500 1634 588.500 1641.900 589.100C1650 589.800 1659 590.500 1665.300 593C1670 595.500 1672.500 599.500 1676.200 602.300C1679 604.500 1682 606 1685.600 607C1690.500 608 1696 608.500 1701.200 608.600C1706.500 608.500 1712 608 1716.900 607"/><path d="M1702.800 590.600C1706.500 592.800 1709.500 595.500 1712.200 598.400C1714.500 601 1716 604 1716.900 607C1714.500 609.300 1712.500 611.500 1710.600 614C1708.500 617.300 1706.700 620.800 1705.200 624.200"/></g></svg>
<div style="left:1751px;top:621px;width:131px;height:23px;background:#1d1d1d"></div>
<div class="t " style="left:1758.5px;top:577px"><i></i><span style="font-size:12.1px;color:#fff;transform:scaleX(0.9730)">Launch Context Menu</span></div>
</body></html>
